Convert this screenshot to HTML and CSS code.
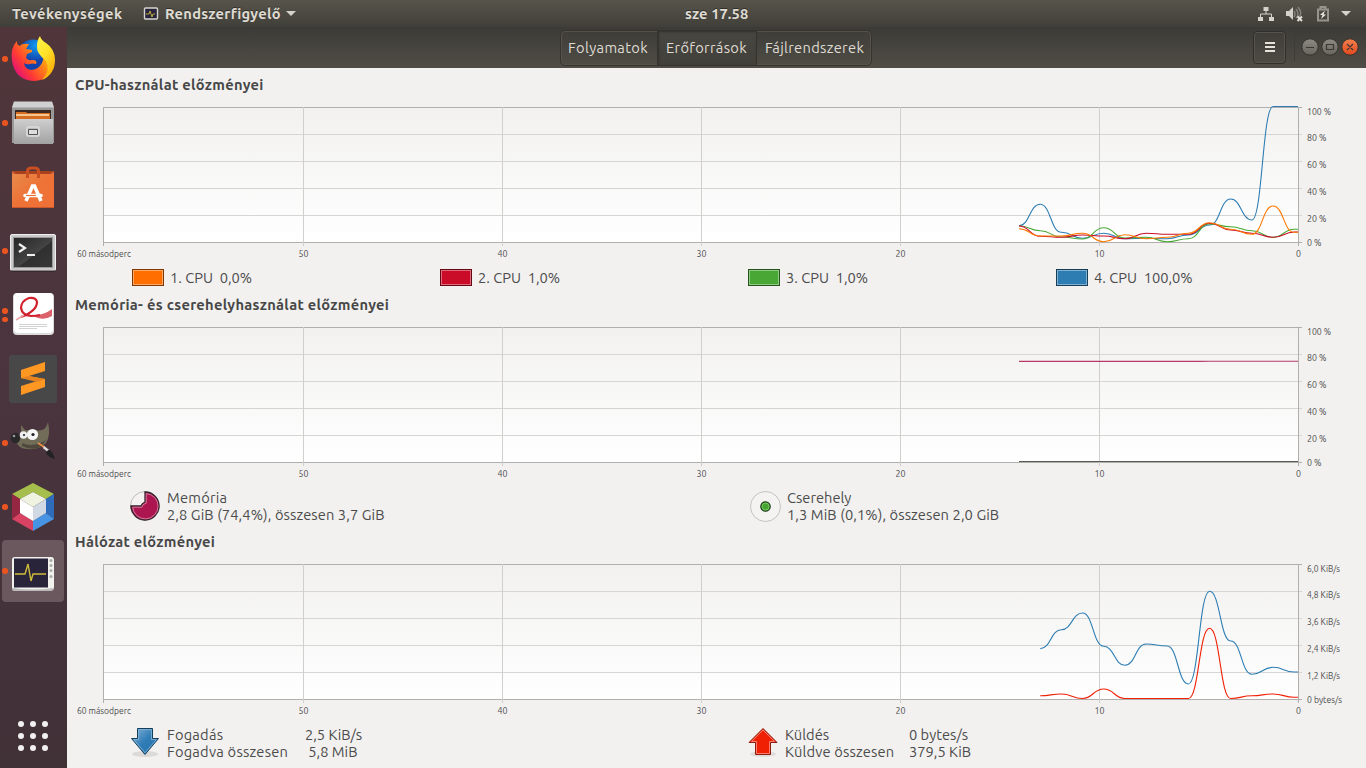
FILE: index.html
```html
<!DOCTYPE html>
<html lang="hu">
<head>
<meta charset="utf-8">
<title>Rendszerfigyelő</title>
<link rel="stylesheet" href="styles.css">
</head>
<body>
<header class="topbar">
  <span class="activities">Tevékenységek</span>
  <svg class="app-mini" width="16" height="14" viewBox="0 0 16 14"><rect x="1.500" y="1" width="13" height="11" rx="1" fill="#28243c" stroke="#d5d5cf" stroke-width="1.4"/><path d="M3 7h3l1-3 2 6 1-3h2" fill="none" stroke="#c9b83d" stroke-width=".9"/></svg>
  <span class="appname">Rendszerfigyelő</span>
  <i class="caret"></i>
  <span class="clock">sze 17.58</span>
  <div class="tray">
    <svg width="16" height="16" viewBox="0 0 16 16" fill="#d4d2ca"><path d="M5.500 1h5v4h-5zM0 11h5v4H0zM11 11h5v4h-5z"/><path d="M8 5v3M2.500 11V8h11v3" fill="none" stroke="#d4d2ca"/></svg>
    <svg width="17" height="16" viewBox="0 0 17 16"><path d="M0 5h3l4-4v13l-4-4H0z" fill="#d4d2ca"/><path d="M8 5q2 3 0 6M10 3q4 5 0 9M12 1q5 6 1 10" fill="none" stroke="#85837b" stroke-width="1.400"/><path d="M11.500 10.500l4.500 4.500M16 10.500L11.500 15" stroke="#e1dfd7" stroke-width="2"/></svg>
    <svg width="12" height="16" viewBox="0 0 12 16"><path d="M1 3.500h10v11H1zM3.500 3V1h5v2" fill="none" stroke="#96948b" stroke-width="2"/><path d="M8 4.500L3 9h2.500L4 13l5-4.500H6.500z" fill="#eeece4"/></svg>
    <i class="caret"></i>
  </div>
</header>
<div class="desktop">
<nav class="dock">
  <div class="launcher"><i class="dots"><b></b></i><svg width="67" height="64" viewBox="0 0 67 64">
    <defs><linearGradient id="fx" x1="1" y1="0" x2="0" y2=".7"><stop offset="0" stop-color="#ffe81f"/><stop offset=".4" stop-color="#ff9a10"/><stop offset=".75" stop-color="#ff3a35"/><stop offset="1" stop-color="#e0107c"/></linearGradient><radialGradient id="fb" cx=".6" cy=".2"><stop offset="0" stop-color="#129bf0"/><stop offset="1" stop-color="#1442ab"/></radialGradient><linearGradient id="fy" x1="0" y1="0" x2=".6" y2="1"><stop offset="0" stop-color="#fff24d"/><stop offset=".5" stop-color="#ffe32a"/><stop offset="1" stop-color="#ffac09"/></linearGradient></defs>
    <circle cx="33" cy="28" r="15.500" fill="url(#fb)"/>
    <path d="M17 14q-7 7-5 20 3 19 22 20 18-1 20-18L44 22q1 19-12 21-7 0-8-7 2 2 6 1 2-1 6 0 2-4-4-4-3 1-6-2l1-4 5-2v-2l-6-1 3-5q-7-1-9 2-3-1-3-3z" fill="url(#fx)"/>
    <path d="M40 9q1 4 6 7 9 6 9 17 0 14-13 20 9-9 4-19-10-8-9-15 0-6 3-10z" fill="url(#fy)"/>
  </svg></div>
  <div class="launcher"><i class="dots"><b></b></i><svg width="67" height="64" viewBox="0 -1 67 64">
    <defs><linearGradient id="gray" x1="0" y1="0" x2="0" y2="1"><stop offset="0" stop-color="#cfcfcf"/><stop offset="1" stop-color="#a2a2a2"/></linearGradient></defs>
    <path d="M14 10h38l2 6v35H12V16z" fill="#999"/><path d="M14 9.500h38l2 6H12z" fill="#d0d0d0"/><path d="M15 18h36v11H15z" fill="#3b2922"/><path d="M16 20h10l1 1h23v8H16z" fill="#d66e22"/><path d="M16 23h33" stroke="#ffe3b9" stroke-width="1.500"/><path d="M14 27h39v25H14z" fill="url(#gray)"/><rect x="27" y="35" width="12" height="9" rx="1" fill="#bbb" stroke="#ddd" stroke-width="1.500"/><path d="M28.500 37.500h9v5h-9z" fill="#ddd" stroke="#555"/>
  </svg></div>
  <div class="launcher"><svg width="67" height="64" viewBox="0 0 67 64">
    <defs><linearGradient id="bag" x1="0" y1="0" x2="1" y2="1"><stop offset="0" stop-color="#e88a4c"/><stop offset=".5" stop-color="#ee7236"/><stop offset="1" stop-color="#f07037"/></linearGradient></defs>
    <path d="M13 16h40l1 4H12z" fill="#a9421c"/><path d="M12 16l5 4H12zM54 16l-5 4h5z" fill="#d9693a"/><path d="M12 19h42v34H12z" fill="url(#bag)"/><path d="M27.500 23v-7q0-3 4-3h3q4 0 4 3v7" fill="none" stroke="#c94f22" stroke-width="3"/><path d="M12 52h42v1H12z" fill="#c9572b"/><path d="M26 46l6.500-15h2L41 46" fill="none" stroke="#fff" stroke-width="3.500"/><path d="M25 40.500h16" stroke="#fff" stroke-width="3.600" stroke-linecap="round"/><path d="M26 40.500h10" stroke="#ed7136" stroke-width="1.200"/>
  </svg></div>
  <div class="launcher"><i class="dots"><b></b></i><svg width="67" height="64" viewBox="0 0 67 64">
    <defs><linearGradient id="term" x1="0" y1="0" x2="1" y2="1"><stop stop-color="#252525"/><stop offset=".55" stop-color="#444"/><stop offset=".56" stop-color="#303030"/><stop offset="1" stop-color="#373737"/></linearGradient></defs>
    <rect x="10.500" y="15.500" width="45" height="36" rx="1.500" fill="#cacaca" stroke="#eee"/><path d="M13.500 18.500h39v30h-39z" fill="url(#term)" stroke="#999"/><path d="M19 25l6 4-6 4M27 36h8" fill="none" stroke="#f0f0f0" stroke-width="2.200"/><path d="M11 52h44" stroke="#261d22"/>
  </svg></div>
  <div class="launcher"><i class="dots"><b></b><b></b></i><svg width="67" height="64" viewBox="0 0 67 64">
    <rect x="13" y="10" width="41" height="42" rx="4" fill="#dcdcdc"/><rect x="14" y="10" width="39" height="40" rx="4" fill="#fff"/><path d="M32 32q11 1 20-6v7q-10 6-20-1z" fill="#db626a"/><path d="M21 34Q37 28 37 19q-1-5-8-4-8 3-8 10 1 7 10 8 5 0 9-1" fill="none" stroke="#d1212c" stroke-width="2.200"/><path d="M16 37l8-5" stroke="#eba4a7" stroke-width="1.500"/><path d="M19 41.500h28M19 43.500h28M19 45.500h18" stroke="#d2d2d2"/>
  </svg></div>
  <div class="launcher"><svg width="67" height="64" viewBox="0 0 67 64">
    <rect x="9" y="8" width="48" height="48" rx="3" fill="#484848"/><path d="M21 23l24-8v9l-16 5 16 3v8l-24 8v-9l16-5-16-3z" fill="#ff9823"/><path d="M28 29l17 3-8 3-16-4z" fill="#e78420"/>
  </svg></div>
  <div class="launcher"><i class="dots"><b></b></i><svg width="67" height="64" viewBox="0 -1 67 64">
    <path d="M21 13l4 5q12 1 17 0 4-1 6-8 3 13-2 21-6 7-18 6-7 0-10-4-4-5 3-10z" fill="#716c58"/><path d="M22 31q12 5 24-3l-5 7q-9 4-19-1z" fill="#4e493c"/><ellipse cx="15.500" cy="26" rx="4.800" ry="5.200" fill="#29292a"/><circle cx="14" cy="24" r="1.300" fill="#999"/><circle cx="23.500" cy="23" r="3.800" fill="#eee"/><circle cx="32.500" cy="22.500" r="5.600" fill="#f6f6f6"/><circle cx="24" cy="23" r="1.100" fill="#222"/><circle cx="33" cy="22.500" r="1.600" fill="#222"/><path d="M38 31l6 4" stroke="#e88d43" stroke-width="2"/><path d="M43.500 35l5 4" stroke="#ddd" stroke-width="2.500"/><path d="M48 38q4-1 7 9-7-2-9-6z" fill="#222"/>
  </svg></div>
  <div class="launcher"><i class="dots"><b></b></i><svg width="67" height="64" viewBox="0 0 67 64">
    <path d="M33 8l21 11-8 5-13-7-13 7-8-5z" fill="#a5be4c"/><path d="M12 19l8 5v14l-8 6z" fill="#962743"/><path d="M12 44l8-6 13 8v10z" fill="#d84363"/><path d="M54 19l-8 5v14l8 6z" fill="#2e6bbb"/><path d="M54 44l-8-6-13 8v10z" fill="#4894e4"/><path d="M20 24l13-7 13 7-13 8z" fill="#eff3df"/><path d="M20 24l13 8v14l-13-8z" fill="#fff"/><path d="M46 24l-13 8v14l13-8z" fill="#d0d9e4"/>
  </svg></div>
  <div class="launcher current"><i class="dots"><b></b></i><svg width="67" height="64" viewBox="0 0 67 64">
    <rect x="12" y="18" width="42" height="33" rx="3" fill="#f1f1ee"/><path d="M12 49q21 3 42 0v1q-1 2-3 2H15q-3 0-3-2z" fill="#bbb9b9"/><rect x="14" y="19.500" width="34" height="29" fill="#29243a"/><path d="M15 35h10l3-10 3 17 2-7h13" fill="none" stroke="#cfbb3a" stroke-width="1.400"/><g fill="#aaa"><circle cx="51" cy="21.500" r="1.500"/><circle cx="51" cy="26.500" r="1.500"/><circle cx="51" cy="31.500" r="1.500"/><circle cx="51" cy="37.500" r="1.500"/></g>
  </svg></div>
  <div class="apps"><i></i><i></i><i></i><i></i><i></i><i></i><i></i><i></i><i></i></div>
</nav>
<main class="window">
  <div class="headerbar">
    <div class="tabs"><span class="t1">Folyamatok</span><span class="t2 active">Erőforrások</span><span class="t3">Fájlrendszerek</span></div>
    <div class="controls">
      <div class="menu"><i></i><i></i><i></i></div><i class="sep"></i>
      <svg width="60" height="20" viewBox="0 0 60 20"><defs><linearGradient id="wb" x1="0" y1="0" x2="0" y2="1"><stop stop-color="#8d8b84"/><stop offset="1" stop-color="#66645d"/></linearGradient><linearGradient id="wc" x1="0" y1="0" x2="0" y2="1"><stop stop-color="#f5804f"/><stop offset="1" stop-color="#e1481c"/></linearGradient></defs><g stroke="#34332e"><circle cx="10" cy="10" r="8.200" fill="url(#wb)"/><circle cx="30" cy="10" r="8.200" fill="url(#wb)"/><circle cx="50" cy="10" r="8.200" fill="url(#wc)"/></g><path d="M6 10.500h8M26.500 7.500h7v5h-7zM47 7l6 6M53 7l-6 6" fill="none" stroke="#3a3933" stroke-width="1.200"/></svg>
    </div>
  </div>
  <section class="cpu">
    <h2>CPU-használat előzményei</h2>
    <svg class="graph" data-chart="cpu" width="1299" height="160"></svg>
    <div class="legend cpus">
      <div><i class="swatch orange"></i><span>1. CPU&nbsp; 0,0%</span></div>
      <div><i class="swatch red"></i><span>2. CPU&nbsp; 1,0%</span></div>
      <div><i class="swatch green"></i><span>3. CPU&nbsp; 1,0%</span></div>
      <div><i class="swatch blue"></i><span>4. CPU&nbsp; 100,0%</span></div>
    </div>
  </section>
  <section class="memory">
    <h2>Memória- és cserehelyhasználat előzményei</h2>
    <svg class="graph" data-chart="mem" width="1299" height="160"></svg>
    <div class="legend pair">
      <div class="entry"><svg width="32" height="32" viewBox="0 0 32 32"><circle cx="16" cy="16" r="14.500" fill="#f4f3f2" stroke="#bdbcba"/><path d="M16 2a14 14 0 1 1-14 14h10q1-3 4-4z" fill="#ad1550" stroke="#302028" stroke-width="1.300"/><path d="M17.200 3.500a12.700 12.700 0 1 1-13.500 13.700H13q0-3 4.200-4z" fill="none" stroke="#d985a5" stroke-width=".9"/></svg>
        <p><span class="wide">Memória</span><br><span class="total">2,8 GiB (74,4%), összesen 3,7 GiB</span></p></div>
      <div class="entry"><svg width="32" height="32" viewBox="0 0 32 32"><circle cx="16.500" cy="16.500" r="15" fill="#f4f3f2" stroke="#c4c3c1"/><circle cx="16.500" cy="16.500" r="4.700" fill="#43a52e" stroke="#1b3c15" stroke-width="1.200"/><circle cx="16.500" cy="16.500" r="3.500" fill="none" stroke="#8bce7b" stroke-width=".8"/></svg>
        <p>Cserehely<br><span class="total">1,3 MiB (0,1%), összesen 2,0 GiB</span></p></div>
    </div>
  </section>
  <section class="network">
    <h2>Hálózat előzményei</h2>
    <svg class="graph" data-chart="net" width="1299" height="160"></svg>
    <div class="legend pair">
      <div class="entry"><svg width="32" height="32" viewBox="0 0 32 32"><defs><linearGradient id="dn" x1="0" y1="0" x2="1" y2="1"><stop stop-color="#84b5d9"/><stop offset=".5" stop-color="#2f7cb6"/><stop offset="1" stop-color="#2370aa"/></linearGradient></defs><ellipse cx="16" cy="27" rx="13" ry="3" fill="#dcdad8"/><path d="M8.500 1.500h15v10h6L16 27.500 2.500 11.500h6z" fill="url(#dn)" stroke="#143d5a"/><path d="M9.600 2.600h12.800v10h5L16 25.800 4.700 12.600h4.900z" fill="none" stroke="#80b3d8" stroke-width=".9"/></svg>
        <p class="names wide">Fogadás<br>Fogadva összesen</p><p class="nums">2,5 KiB/s<br>&nbsp;5,8 MiB</p></div>
      <div class="entry up"><svg width="32" height="32" viewBox="0 0 32 32"><ellipse cx="16" cy="27" rx="13" ry="3" fill="#dfdddb"/><path d="M16 1.500l14 14h-6.500v12h-15v-12H2z" fill="#f02005" stroke="#8e1b0d"/><path d="M16 3L27.500 14.500h-5v12h-13v-12h-5z" fill="none" stroke="#ff8a78" stroke-width=".9"/></svg>
        <p class="names">Küldés<br><span class="sent">Küldve összesen</span></p><p class="nums">0 bytes/s<br>379,5 KiB</p></div>
    </div>
  </section>
</main>
</div>
<script src="charts.js"></script>
</body>
</html>
```
FILE: styles.css
```css
* { box-sizing: border-box; }
body { margin: 0; width: 1366px; height: 768px; overflow: hidden; font: 14.667px/17px Ubuntu, "Noto Sans", sans-serif; color: #4c4c4c; background: #f2f1f0; }
p, h2 { margin: 0; }
.topbar { height: 27px; display: flex; align-items: center; background: linear-gradient(#57544b, #403f39); color: #dfdbd2; font-weight: bold; padding: 0 15px 0 12px; text-shadow: 0 -1px #302f2a; white-space: nowrap; }
.activities { width: 131px; letter-spacing: .4px; }
.app-mini { width: 16px; margin-right: 6px; }
.appname { width: 121px; letter-spacing: .28px; }
.caret { width: 0; height: 0; border: 5px solid transparent; border-top-color: #d4d2ca; border-bottom: 0; }
.clock { margin-left: 389px; letter-spacing: .1px; }
.tray { margin-left: auto; display: flex; align-items: center; }
.tray svg:nth-child(1) { margin-right: 12px; }
.tray svg:nth-child(2) { margin-right: 14px; }
.tray svg:nth-child(3) { margin-right: 12px; }
.desktop { display: flex; height: 741px; }
.dock { width: 67px; display: flex; flex-direction: column; background: linear-gradient(#50363a, #4a343e 50%, #403137); }
.launcher { position: relative; height: 64px; }
.launcher svg { display: block; position: relative; }
.current::before { content: ""; position: absolute; left: 2px; top: 1px; width: 62px; height: 62px; border-radius: 4px; background: #6a585e; }
.dots { position: absolute; z-index: 1; left: 2px; top: 0; height: 64px; display: flex; flex-direction: column; justify-content: center; gap: 3px; }
.dots b { width: 5.500px; height: 5.500px; border-radius: 50%; background: #ea5420; }
.apps { margin: auto 18px 17px; display: grid; grid-template-columns: repeat(3, 6px); gap: 6px; }
.apps i { width: 6px; height: 6px; border-radius: 50%; background: #f2f0f0; }
.window { width: 1299px; background: #f2f1f0; }
.headerbar { height: 41px; background: linear-gradient(#3c3b37, #504d46); display: flex; padding-top: 3px; justify-content: space-between; }
.tabs { display: flex; height: 36px; margin-left: 493px; border: 1px solid #34332e; border-radius: 5px; box-shadow: inset 0 0 0 1px #545249; color: #dfdbd2; line-height: 34px; text-align: center; letter-spacing: .32px; }
.tabs span { border-right: 1px solid #34332e; }
.t1 { width: 97px; }
.t2 { width: 99px; }
.t3 { width: 114px; }
.tabs .t1 { padding-right: 2px; }
.tabs .t2 { padding-right: 1px; }
.tabs .t3 { border: 0; padding-left: 1px; }
.tabs .active { background: linear-gradient(#484640, #42403a); box-shadow: inset 1px 1px 2px #33322d; }
.controls { display: flex; align-items: center; height: 34px; margin-right: 6px; }
.menu { width: 33px; height: 33px; border: 1px solid #302f2b; border-radius: 4px; box-shadow: inset 0 0 0 1px #55534b; display: flex; flex-direction: column; gap: 2px; align-items: center; justify-content: center; }
.menu i { width: 10px; height: 2px; background: #e4e1d8; }
.sep { width: 1px; height: 28px; margin: 0 5px 0 8px; background: #3c3b36; }
section { height: 237px; }
.cpu { height: 220px; }
h2 { height: 34px; padding-left: 8px; font-size: 14.667px; line-height: 34px; letter-spacing: .3px; color: #474747; }
.graph { display: block; height: 160px; }
.graph text { font-size: 9px; fill: #4c4c4c; }
.legend { white-space: nowrap; }
.wide { letter-spacing: .22px; }
.total { letter-spacing: .09px; }
.sent { letter-spacing: .15px; }
.cpus { display: grid; grid-template-columns: repeat(4, 308px); padding: 7px 0 0 65px; }
.cpus div { display: flex; align-items: center; gap: 6px; }
.swatch { width: 32px; height: 17px; border: 1px solid; box-shadow: inset 0 0 0 1px rgba(255,255,255,.4); }
.orange { background: #ff6e00; border-color: #803700; }
.red { background: #cb0c29; border-color: #650614; }
.green { background: #49a835; border-color: #25541a; }
.blue { background: #2d7db3; border-color: #163e59; }
.pair { display: grid; grid-template-columns: 620px 600px; padding: 7px 0 0 62px; }
.entry { display: flex; gap: 6px; }
.entry svg { margin-top: 1px; }
.up { margin-left: -2px; }
.names { width: 132px; }
.up .names { width: 118px; }
```
FILE: charts.js
```js
const NS = 'http://www.w3.org/2000/svg';
const percent = ['100 %', '80 %', '60 %', '40 %', '20 %', '0 %'];
const charts = {
  cpu: { labels: percent, start: 952, series: [
    ['#2d7db3', [123.7,102.3,130.3,136.3,131.3,136.7,136.3,136.7,133,123,97,118,4.5,4.5]],
    ['#49a835', [123.7,128.7,135,137,125.7,136,135.3,139.7,136.7,122,124.7,128.7,135.3,127.3]],
    ['#cb0c29', [124,134.3,135.3,133,134,136.7,131.3,132.3,132.3,121.3,128,131.3,135.3,130]],
    ['#ff7800', [126.7,134,134,131.3,139.7,132.7,136.7,135.3,131.3,120.7,127.3,132.3,104,130.3]]] },
  mem: { labels: percent, start: 952, series: [
    ['#b53a68', [39.4,39.4,39.4,39.4,39.4,39.4,39.4,39.4,39.4,39.3,39.3,39.3,39.3,39.3]],
    ['#555b54', Array(14).fill(139.5)]] },
  net: { labels: ['6,0 KiB/s', '4,8 KiB/s', '3,6 KiB/s', '2,4 KiB/s', '1,2 KiB/s', '0 bytes/s'], start: 973.2, series: [
    ['#2d7db3', [89.7,70.7,54,87.3,106.3,85,87,125,32.3,82,115.3,108.3,113]],
    ['#f02005', [136.7,135,139.5,130,139.5,139.5,139.5,139.5,69.3,139.5,136.7,135,138.3]]] }
};
const STEP = 21.17;

function add(parent, name, attrs, text) {
  const node = document.createElementNS(NS, name);
  for (const key in attrs) node.setAttribute(key, attrs[key]);
  if (text) node.textContent = text;
  parent.append(node);
}

function curve(start, values) {
  let d = `M${start} ${values[0]}`;
  for (let i = 1; i < values.length; i++) {
    const x = start + i * STEP, mid = x - STEP / 2;
    d += `C${mid} ${values[i - 1]} ${mid} ${values[i]} ${x} ${values[i]}`;
  }
  return d + 'H1231';
}

document.querySelectorAll('[data-chart]').forEach(svg => {
  const id = svg.dataset.chart, chart = charts[id];
  svg.innerHTML = `<defs><linearGradient id="bg-${id}" x1="0" y1="0" x2="0" y2="1"><stop stop-color="#f2f1f0"/><stop offset="1" stop-color="#fff"/></linearGradient></defs>`;
  add(svg, 'rect', { x: 36, y: 5, width: 1195, height: 135, fill: `url(#bg-${id})` });

  // Value axis
  const sizes = id === 'net' ? [33, 33, 33, 33, 33, 35] : [24, 19.5, 19.5, 19.5, 19.5, 14.5];
  chart.labels.forEach((label, i) => {
    const y = 5.5 + 27 * i;
    add(svg, 'path', { d: `M36 ${y}H1235`, stroke: i % 5 ? '#d6d5d4' : '#b0afae' });
    add(svg, 'text', { x: 1240, y: [13, 39, 66, 93, 120, 143.5][i], textLength: sizes[i], lengthAdjust: 'spacingAndGlyphs' }, label);
  });

  // Time axis
  ['60 másodperc', '50', '40', '30', '20', '10', '0'].forEach((label, i) => {
    const x = i ? 1231.5 - 199 * (6 - i) : 36.5;
    const w = i === 0 ? 54 : i === 6 ? 5 : 10;
    add(svg, 'path', { d: `M${x} 5V144`, stroke: i % 6 ? '#d0cfce' : '#b0afae' });
    add(svg, 'text', { x: i ? x - w / 2 : 10, y: 155, textLength: w, lengthAdjust: 'spacingAndGlyphs' }, label);
  });

  chart.series.forEach(([color, values]) => add(svg, 'path', { d: curve(chart.start, values), fill: 'none', stroke: color, 'stroke-width': 1.1 }));
});
```
